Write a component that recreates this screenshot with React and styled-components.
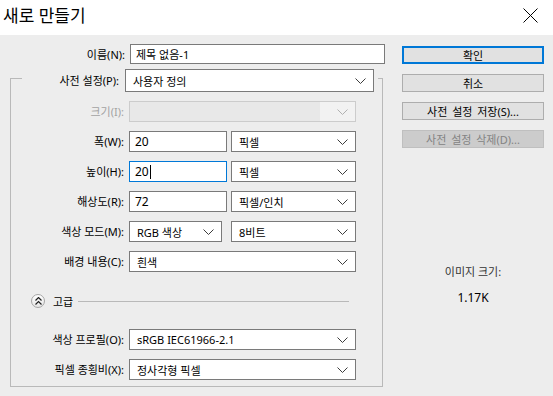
import React from 'react';
import styled, { createGlobalStyle } from 'styled-components';

const Global = createGlobalStyle`
  body {
    margin: 0;
    background: #ededed;
    font-family: "Noto Sans", "Noto Sans CJK KR", sans-serif;
    font-size: 11px;
    color: #000;
  }
`

const Window = styled.div`
  width: 553px;
  height: 396px;
  display: flex;
  flex-direction: column;
  background: #ededed;
  overflow: hidden;
`
const TitleBar = styled.div`
  height: 35px;
  flex: none;
  background: #fff;
  display: flex;
  align-items: center;
  justify-content: space-between;
  padding-left: 3px;
`
const Title = styled.div`
  font-size: 17px;
  line-height: 20px;
  margin-top: -3px;
`
const Close = styled.div`
  width: 46px;
  height: 35px;
  display: flex;
  align-items: center;
  justify-content: center;
  margin-top: -5px;
`
const Body = styled.div`
  display: flex;
  padding-top: 9px;
`
const FormColumn = styled.div`
  width: 375px;
  padding-left: 10px;
  display: flex;
  flex-direction: column;
`
const NameRow = styled.div`
  display: flex;
  align-items: center;
  height: 20px;
`
const Label = styled.label`
  width: ${p => p.$w || 113}px;
  flex: none;
  text-align: right;
  margin-right: ${p => p.$gap || 5}px;
  white-space: nowrap;
  color: ${p => (p.$disabled ? '#a3a3a3' : '#000')};
  line-height: 15px;
`
const Input = styled.div`
  box-sizing: border-box;
  width: ${p => p.$w}px;
  height: ${p => p.$h || 21}px;
  background: #fff;
  border: 1px solid ${p => (p.$focus ? '#0078d7' : '#7a7a7a')};
  padding-left: 5px;
  display: flex;
  align-items: center;
  white-space: nowrap;
  flex: none;
  font-size: ${p => p.$fs || 12}px;
`
const Caret = styled.span`
  display: inline-block;
  width: 1px;
  height: 14px;
  background: #000;
  margin-left: 1px;
`
const SelectBox = styled.div`
  box-sizing: border-box;
  width: ${p => p.$w}px;
  height: ${p => p.$h || 21}px;
  background: ${p => (p.$disabled ? '#e8e8e8' : '#fff')};
  border: 1px solid ${p => (p.$disabled ? '#cccccc' : '#7a7a7a')};
  padding-left: 7px;
  display: flex;
  align-items: center;
  justify-content: space-between;
  white-space: nowrap;
  flex: none;
  margin-right: ${p => p.$mr || 0}px;
`
const ArrowArea = styled.div`
  align-self: stretch;
  width: ${p => (p.$disabled ? 28 : 20)}px;
  padding-right: 7px;
  display: flex;
  align-items: center;
  justify-content: flex-end;
  background: ${p => (p.$disabled ? '#f2f2f2' : 'transparent')};
`
const Group = styled.fieldset`
  box-sizing: border-box;
  width: 373px;
  margin: 0;
  padding: 9px 0 6px 0;
  border: 1px solid #b9b9b9;
  display: flex;
  flex-direction: column;
  gap: 9px;
`
const Legend = styled.legend`
  margin-left: 11px;
  padding: 5px 4px 0 0;
  display: flex;
  align-items: center;
`
const Row = styled.div`
  display: flex;
  align-items: center;
  height: 21px;
  gap: 4px;
  & > label { margin-right: 1px; }
`
const Advanced = styled.div`
  display: flex;
  align-items: center;
  height: 18px;
  margin: 11px 0 10px;
  padding-left: 20px;
`
const RoundButton = styled.div`
  box-sizing: border-box;
  width: 14px;
  height: 14px;
  border-radius: 50%;
  border: 1px solid #a6a6a6;
  background: linear-gradient(#ffffff, #e6e6e6);
  display: flex;
  align-items: center;
  justify-content: center;
`
const AdvText = styled.span`
  margin-left: 8px;
`
const Rule = styled.div`
  margin-left: 5px;
  width: 271px;
  height: 1px;
  background: #b9b9b9;
`
const ButtonColumn = styled.div`
  width: 142px;
  margin-left: 17px;
  padding-top: 2px;
  display: flex;
  flex-direction: column;
  gap: 10px;
`
const Button = styled.div`
  box-sizing: border-box;
  height: 18px;
  display: flex;
  align-items: center;
  justify-content: center;
  background: ${p => (p.$disabled ? '#cccccc' : '#e1e1e1')};
  border: ${p => (p.$default ? '2px solid #0078d7' : `1px solid ${p.$disabled ? '#bfbfbf' : '#adadad'}`)};
  color: ${p => (p.$disabled ? '#838383' : '#000')};
  line-height: 15px;
  word-spacing: 2px;
  white-space: nowrap;
`
const Info = styled.div`
  margin-top: 105px;
  display: flex;
  flex-direction: column;
  align-items: center;
  gap: 10px;
  color: #333;
`
const InfoValue = styled.div`
  color: #000;
  font-size: 12px;
`

const Chevron = ({ color = '#3c3c3c' }) => (
  <svg width="11" height="6" viewBox="0 0 11 6">
    <polyline points="0.5,0.5 5.5,5.5 10.5,0.5" fill="none" stroke={color} strokeWidth="1" />
  </svg>
)

const Select = ({ w, h, mr, disabled, children }) => (
  <SelectBox $w={w} $h={h} $mr={mr} $disabled={disabled}>
    <span>{children}</span>
    <ArrowArea $disabled={disabled}>
      <Chevron color={disabled ? '#b0b0b0' : '#3c3c3c'} />
    </ArrowArea>
  </SelectBox>
)

export default function App() {
  return (
    <Window>
      <Global />
      <TitleBar>
        <Title>새로 만들기</Title>
        <Close>
          <svg width="15" height="15" viewBox="0 0 15 15">
            <path d="M0.5 0.5 L14.5 14.5 M14.5 0.5 L0.5 14.5" stroke="#000" strokeWidth="1" />
          </svg>
        </Close>
      </TitleBar>
      <Body>
        <FormColumn>
          <NameRow>
            <Label $w={115}>이름(N):</Label>
            <Input $w={255} $h={20} $fs={11}>제목 없음-1</Input>
          </NameRow>
          <Group>
            <Legend>
              <Label $w={97} $gap={6}>사전 설정(P):</Label>
              <Select w={249} h={23}>사용자 정의</Select>
            </Legend>
            <Row>
              <Label $disabled>크기(I):</Label>
              <Select w={227} disabled />
            </Row>
            <Row>
              <Label>폭(W):</Label>
              <Input $w={98}>20</Input>
              <Select w={125}>픽셀</Select>
            </Row>
            <Row>
              <Label>높이(H):</Label>
              <Input $w={98} $focus>20<Caret /></Input>
              <Select w={125}>픽셀</Select>
            </Row>
            <Row>
              <Label>해상도(R):</Label>
              <Input $w={98}>72</Input>
              <Select w={125}>픽셀/인치</Select>
            </Row>
            <Row>
              <Label>색상 모드(M):</Label>
              <Select w={93} mr={5}>RGB 색상</Select>
              <Select w={125}>8비트</Select>
            </Row>
            <Row>
              <Label>배경 내용(C):</Label>
              <Select w={227}>흰색</Select>
            </Row>
            <Advanced>
              <RoundButton>
                <svg width="7" height="8" viewBox="0 0 7 8">
                  <polyline points="0.5,3.5 3.5,0.5 6.5,3.5" fill="none" stroke="#222" strokeWidth="1.2" />
                  <polyline points="0.5,7.5 3.5,4.5 6.5,7.5" fill="none" stroke="#222" strokeWidth="1.2" />
                </svg>
              </RoundButton>
              <AdvText>고급</AdvText>
              <Rule />
            </Advanced>
            <Row>
              <Label>색상 프로필(O):</Label>
              <Select w={227}>sRGB IEC61966-2.1</Select>
            </Row>
            <Row>
              <Label>픽셀 종횡비(X):</Label>
              <Select w={227}>정사각형 픽셀</Select>
            </Row>
          </Group>
        </FormColumn>
        <ButtonColumn>
          <Button $default>확인</Button>
          <Button>취소</Button>
          <Button>사전 설정 저장(S)...</Button>
          <Button $disabled>사전 설정 삭제(D)...</Button>
          <Info>
            <div>이미지 크기:</div>
            <InfoValue>1.17K</InfoValue>
          </Info>
        </ButtonColumn>
      </Body>
    </Window>
  )
}
